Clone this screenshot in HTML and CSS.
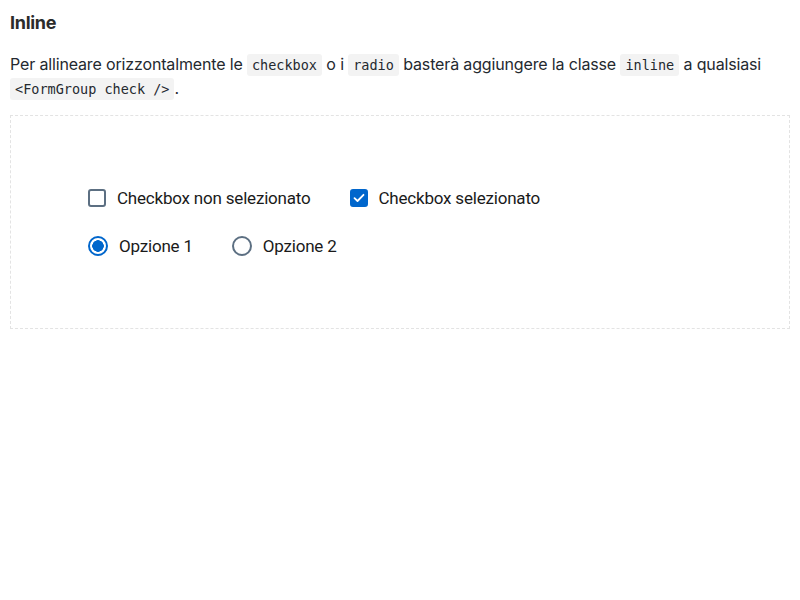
FILE: index.html
```html
<!DOCTYPE html>
<html lang="it">
<head>
<meta charset="utf-8">
<link rel="stylesheet" href="styles.css">
</head>
<body>
<h3 class="title">Inline</h3>
<p class="lead">Per allineare orizzontalmente le <code>checkbox</code> o i <code>radio</code> basterà aggiungere la classe <code>inline</code> a qualsiasi <code>&lt;FormGroup check /&gt;</code>.</p>
<div class="example">
  <div class="row">
    <label class="check">
      <span class="box"></span>
      <span class="label">Checkbox non selezionato</span>
    </label>
    <label class="check">
      <span class="box checked">
        <svg width="12" height="10" viewBox="0 0 12 10"><path d="M1.5 5.2 L4.5 8 L10.5 1.8" fill="none" stroke="#fff" stroke-width="1.8" stroke-linecap="round" stroke-linejoin="round"/></svg>
      </span>
      <span class="label">Checkbox selezionato</span>
    </label>
  </div>
  <div class="row">
    <label class="check">
      <span class="radio on"></span>
      <span class="label">Opzione 1</span>
    </label>
    <label class="check">
      <span class="radio"></span>
      <span class="label">Opzione 2</span>
    </label>
  </div>
</div>
</body>
</html>
```
FILE: styles.css
```css
html, body {
  margin: 0;
  padding: 0;
  background: #fff;
}
body {
  padding: 10px;
  font-family: Inter, "Noto Sans", sans-serif;
  color: #1f2328;
}
.title {
  margin: 1px 0 0;
  font-size: 18px;
  line-height: 24px;
  font-weight: 700;
  color: #2b2b2b;
  letter-spacing: -0.3px;
}
.lead {
  margin: 17px 0 0;
  font-size: 16px;
  line-height: 24px;
  color: #24292f;
  letter-spacing: -0.15px;
}
code {
  font-family: "DejaVu Sans Mono", monospace;
  font-size: 13.5px;
  line-height: 1;
  letter-spacing: 0;
  background: #f3f3f3;
  border-radius: 3px;
  padding: 3px 5px;
  color: #24292f;
}
.example {
  margin-top: 15px;
  border: 1px dashed #e3e3e3;
  height: 214px;
  box-sizing: border-box;
  padding: 70px 0 0 77px;
}
.row {
  display: flex;
  gap: 39px;
  height: 24px;
  align-items: center;
  margin-bottom: 24px;
}
.check {
  display: flex;
  align-items: center;
  gap: 11px;
}
.label {
  font-family: Roboto, sans-serif;
  font-size: 17px;
  color: #1a1a1a;
  letter-spacing: -0.2px;
}
.box {
  width: 18px;
  height: 18px;
  box-sizing: border-box;
  border: 2px solid #5c6f82;
  border-radius: 3px;
  display: flex;
  align-items: center;
  justify-content: center;
}
.box.checked {
  background: #0066cc;
  border-color: #0066cc;
}
.radio {
  width: 20px;
  height: 20px;
  box-sizing: border-box;
  border: 2px solid #5c6f82;
  border-radius: 50%;
}
.radio.on {
  border-color: #0066cc;
  background: radial-gradient(circle, #0066cc 0 5.5px, #fff 6px);
}
```
